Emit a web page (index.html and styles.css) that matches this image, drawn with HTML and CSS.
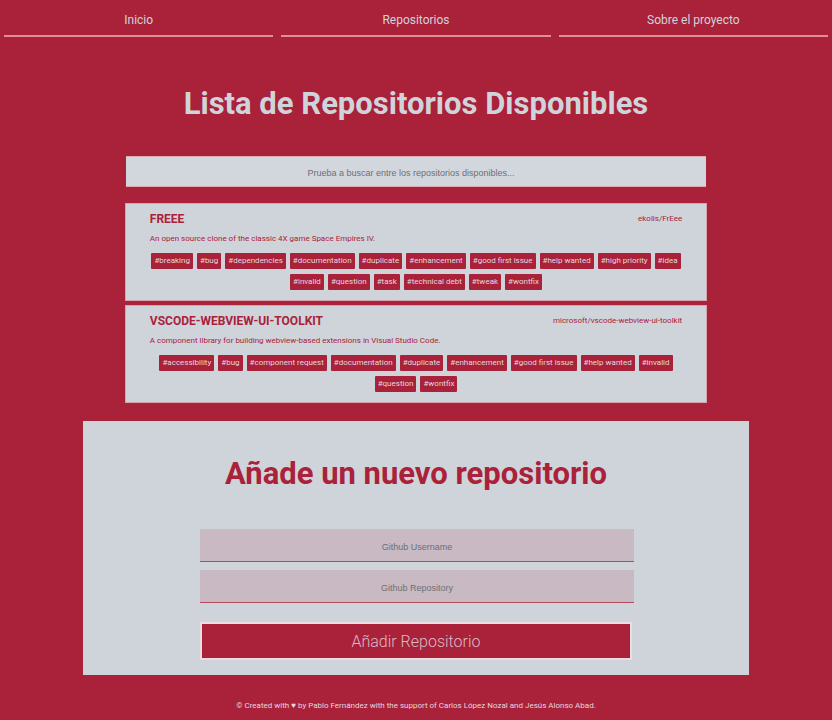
FILE: index.html
```html
<!DOCTYPE html>
<html lang="es">
<head>
<meta charset="utf-8">
<meta name="viewport" content="width=device-width, initial-scale=1">
<title>Lista de Repositorios Disponibles</title>
<link rel="stylesheet" href="styles.css">
</head>
<body>
<nav class="nav">
  <a class="nav-link" href="#inicio">Inicio</a>
  <a class="nav-link" href="#repositorios">Repositorios</a>
  <a class="nav-link" href="#proyecto">Sobre el proyecto</a>
</nav>
<main>
  <h1 class="title">Lista de Repositorios Disponibles</h1>
  <div class="list">
    <input class="search" type="search" aria-label="Buscar repositorios" placeholder="Prueba a buscar entre los repositorios disponibles...">
    <article class="card">
      <header class="card-head">
        <h2 class="card-title">FREEE</h2>
        <a class="card-path" href="#freee">ekolis/FrEee</a>
      </header>
      <p class="card-text">An open source clone of the classic 4X game Space Empires IV.</p>
      <ul class="tags">
        <li class="tag">#breaking</li>
        <li class="tag">#bug</li>
        <li class="tag">#dependencies</li>
        <li class="tag">#documentation</li>
        <li class="tag">#duplicate</li>
        <li class="tag">#enhancement</li>
        <li class="tag">#good first issue</li>
        <li class="tag">#help wanted</li>
        <li class="tag">#high priority</li>
        <li class="tag">#idea</li>
        <li class="tag">#invalid</li>
        <li class="tag">#question</li>
        <li class="tag">#task</li>
        <li class="tag">#technical debt</li>
        <li class="tag">#tweak</li>
        <li class="tag">#wontfix</li>
      </ul>
    </article>
    <article class="card">
      <header class="card-head">
        <h2 class="card-title">VSCODE-WEBVIEW-UI-TOOLKIT</h2>
        <a class="card-path" href="#toolkit">microsoft/vscode-webview-ui-toolkit</a>
      </header>
      <p class="card-text">A component library for building webview-based extensions in Visual Studio Code.</p>
      <ul class="tags">
        <li class="tag">#accessibility</li>
        <li class="tag">#bug</li>
        <li class="tag">#component request</li>
        <li class="tag">#documentation</li>
        <li class="tag">#duplicate</li>
        <li class="tag">#enhancement</li>
        <li class="tag">#good first issue</li>
        <li class="tag">#help wanted</li>
        <li class="tag">#invalid</li>
        <li class="tag">#question</li>
        <li class="tag">#wontfix</li>
      </ul>
    </article>
  </div>
  <section class="panel">
    <h2 class="title title-panel">Añade un nuevo repositorio</h2>
    <form class="form">
      <input class="field" type="text" aria-label="Github Username" placeholder="Github Username">
      <input class="field" type="text" aria-label="Github Repository" placeholder="Github Repository">
      <button class="submit" type="submit">Añadir Repositorio</button>
    </form>
  </section>
</main>
<footer class="footer">© Created with ♥ by Pablo Fernández with the support of Carlos López Nozal and Jesús Alonso Abad.</footer>
</body>
</html>
```

FILE: styles.css
```css
:root {
  --red: #aa213a;
  --light: #cfd4da;
}

* {
  box-sizing: border-box;
}

body {
  margin: 0;
  background: var(--red);
  color: var(--light);
  font-family: Roboto, sans-serif;
  font-size: 8px;
  line-height: 12px;
}

.nav {
  display: grid;
  grid-template-columns: repeat(3, 1fr);
  gap: 8px;
  padding: 4px 4px 0;
}

.nav-link {
  padding: 8px 0 7px;
  border-bottom: 2px solid #e08c9b;
  color: inherit;
  font-size: 12px;
  line-height: 16px;
  text-align: center;
  text-decoration: none;
}

.title {
  margin: 0;
  padding: 47px 0 32px;
  font-size: 31px;
  line-height: 40px;
  font-weight: 700;
  text-align: center;
}

.list {
  display: flex;
  flex-direction: column;
  gap: 4px;
  width: 70%;
  margin: 0 auto;
}

.search {
  height: 31px;
  margin: 0 1px 12px;
  padding: 3px 0 0;
  border: 1px solid #dcaab4;
  border-width: 1px 0;
  border-radius: 0;
  background: #d2d7de;
  appearance: none;
  font: 9px "Liberation Sans", sans-serif;
  text-align: center;
}

.search::placeholder,
.field::placeholder {
  color: #6d6f76;
}

.card {
  padding: 7px 24px 10px;
  border: 1px solid #d5a3ae;
  background: var(--light);
  color: var(--red);
}

.card-head {
  display: flex;
  align-items: center;
  justify-content: space-between;
}

.card-title {
  margin: 0;
  font-size: 12px;
  line-height: 16px;
}

.card-path {
  color: inherit;
  text-decoration: none;
}

.card-text {
  margin: 6px 0 8px;
}

.tags {
  display: flex;
  flex-wrap: wrap;
  justify-content: center;
  gap: 5px 4px;
  margin: 0;
  padding: 0;
  list-style: none;
}

.tag {
  padding: 2px 3px;
  border-radius: 1px;
  background: var(--red);
  color: #e3d8df;
}

.panel {
  width: 80%;
  margin: 18px auto 0;
  padding-bottom: 15px;
  background: var(--light);
  color: var(--red);
}

.title-panel {
  padding: 33px 0 35px;
}

.form {
  display: flex;
  flex-direction: column;
  gap: 8px;
  width: 436px;
  max-width: 100%;
  margin: 0 auto;
  padding-left: 2px;
}

.field {
  height: 33px;
  padding: 3px 0 0;
  border: 0;
  border-bottom: 1px solid #b5495d;
  border-radius: 0;
  background: #c9b9c2;
  font: 9px "Liberation Sans", sans-serif;
  text-align: center;
}

.submit {
  height: 38px;
  margin: 11px 2px 0 0;
  border: 2px solid #e9dde1;
  background: var(--red);
  color: #d8bcc7;
  font: 300 16px Roboto, sans-serif;
}

.footer {
  padding: 25px 0 8px;
  color: #e3d8df;
  text-align: center;
}
```
